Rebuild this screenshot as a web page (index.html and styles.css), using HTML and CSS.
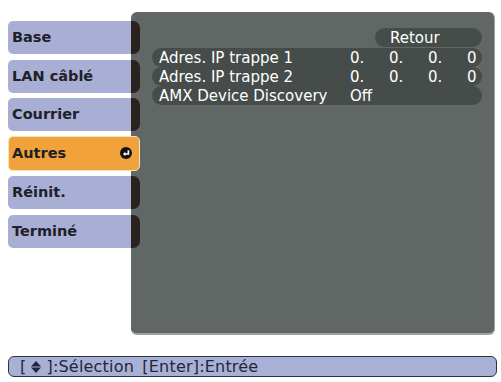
FILE: index.html
```html
<!DOCTYPE html>
<html lang="fr">
<head>
  <meta charset="UTF-8">
  <meta name="viewport" content="width=device-width, initial-scale=1.0">
  <title>Réseau - Autres</title>
  <link rel="stylesheet" href="styles.css">
</head>
<body>
  <div class="screen">
    <div class="menu">
      <ul class="tabs">
        <li class="tab">Base</li>
        <li class="tab">LAN câblé</li>
        <li class="tab">Courrier</li>
        <li class="tab active">Autres
          <svg class="enter-icon" viewBox="0 0 12 12" width="12" height="12">
            <circle cx="6" cy="6" r="6" fill="#111"/>
            <path d="M8.4 3.2V7H4.6" stroke="#fff" stroke-width="1.7" fill="none"/>
            <path d="M5.4 4.7L3 7L5.4 9.3Z" fill="#fff"/>
          </svg>
        </li>
        <li class="tab">Réinit.</li>
        <li class="tab">Terminé</li>
      </ul>

      <div class="panel">
        <div class="row row-back">Retour</div>
        <div class="rows">
          <div class="row">
            <span class="label">Adres. IP trappe 1</span>
            <span class="val">0.</span><span class="val">0.</span><span class="val">0.</span><span class="val">0</span>
          </div>
          <div class="row">
            <span class="label">Adres. IP trappe 2</span>
            <span class="val">0.</span><span class="val">0.</span><span class="val">0.</span><span class="val">0</span>
          </div>
          <div class="row">
            <span class="label">AMX Device Discovery</span>
            <span class="val">Off</span>
          </div>
        </div>
      </div>
    </div>

    <div class="help-bar">[<svg class="updown" viewBox="0 0 10 12" width="10" height="12"><path d="M5 0L10 5.5H0Z" fill="#23263a"/><path d="M0 6.5H10L5 12Z" fill="#23263a"/></svg>]:Sélection <span class="key">[Enter]:Entrée</span></div>
  </div>
</body>
</html>
```

FILE: styles.css
```css
body {
  margin: 0;
  background: #fff;
  font-family: 'DejaVu Sans', Verdana, sans-serif;
}
.screen {
  padding: 12px 6px 0 8px;
}
.menu {
  display: flex;
  height: 323px;
}
.tabs {
  list-style: none;
  margin: 0;
  padding: 9px 0 0 0;
  width: 123px;
  flex: none;
  position: relative;
  z-index: 1;
}
.tab {
  position: relative;
  height: 33px;
  line-height: 33px;
  margin-bottom: 5.6px;
  padding-left: 4px;
  background: #a9afd4;
  border-radius: 5px 0 0 5px;
  font-weight: bold;
  font-size: 14.5px;
  color: #202029;
}
.tab::after {
  content: "";
  position: absolute;
  top: 0;
  right: -9px;
  width: 9px;
  height: 100%;
  background: #2a2121;
  border-radius: 0 7px 7px 0;
}
.tab.active {
  display: flex;
  align-items: center;
  justify-content: space-between;
  margin-top: -1px;
  margin-right: -9px;
  padding-left: 3px;
  padding-right: 7px;
  background: #f2a23a;
  border: 1px solid #f6e2b8;
  border-radius: 5px;
  line-height: normal;
}
.tab.active::after {
  display: none;
}
.enter-icon {
  display: block;
}
.panel {
  flex: none;
  width: 364px;
  height: 323px;
  box-sizing: border-box;
  padding: 16px 12px 0 21px;
  background: #606765;
  border-radius: 6px;
  border-right: 1px solid #9ea2a0;
  border-bottom: 2px solid #9ea2a0;
  color: #fff;
  font-size: 15px;
}
.row {
  display: flex;
  align-items: center;
  height: 19px;
  padding-left: 7px;
  background: #464c4a;
  border-radius: 9.5px;
  white-space: nowrap;
}
.row-back {
  width: 107px;
  margin-left: auto;
  padding-left: 15px;
  box-sizing: border-box;
  margin-bottom: 1px;
}
.label {
  width: 191px;
  flex: none;
}
.val {
  width: 39px;
  flex: none;
}
.help-bar {
  display: flex;
  align-items: center;
  height: 19px;
  width: 476px;
  margin-top: 21px;
  padding-left: 11px;
  background: #a9b0d5;
  border: 1px solid #2d3245;
  border-radius: 6px;
  font-size: 16px;
  letter-spacing: 0.2px;
  color: #23263a;
  white-space: pre;
}
.updown {
  margin: 0 5px;
}
.key {
  margin-left: 3px;
}
```
